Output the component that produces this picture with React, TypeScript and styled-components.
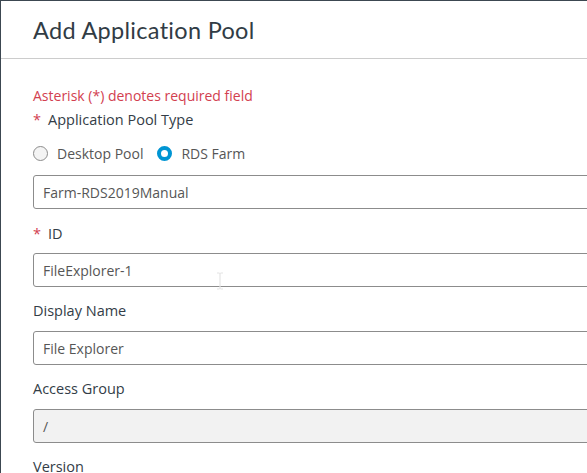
import styled, { createGlobalStyle } from 'styled-components';

const GlobalStyle = createGlobalStyle`
  html, body {
    margin: 0;
    padding: 0;
    background: #3c4751;
    overflow: hidden;
  }
  body {
    font-family: "Open Sans", "Liberation Sans", sans-serif;
  }
`;

const Modal = styled.div`
  margin: 1px 0 0 1px;
  width: 720px;
  height: 520px;
  background: #fff;
  position: relative;
`;

const Header = styled.div`
  height: 57px;
  border-bottom: 1px solid #cccccc;
  display: flex;
  align-items: center;
  padding-left: 32px;
`;

const Title = styled.h2`
  margin: 0;
  font-family: "Lato", "Open Sans", sans-serif;
  font-weight: 400;
  font-size: 23.5px;
  color: #313c45;
  letter-spacing: 0.3px;
`;

const Body = styled.div`
  padding: 28px 0 0 32px;
  display: flex;
  flex-direction: column;
`;

const RequiredNote = styled.div`
  font-size: 14px;
  color: #d2404f;
  line-height: 18px;
`;

const Label = styled.div<{ $gap?: number }>`
  display: flex;
  align-items: center;
  gap: 8px;
  font-size: 14.5px;
  font-weight: 500;
  color: #333d47;
  line-height: 20px;
  margin-top: ${p => p.$gap ?? 0}px;
`;

const Star = styled.span`
  color: #d2404f;
  font-weight: 400;
  width: 7px;
`;

const RadioRow = styled.div`
  display: flex;
  align-items: center;
  gap: 14px;
  margin-top: 13px;
  height: 20px;
`;

const RadioOption = styled.label`
  display: flex;
  align-items: center;
  gap: 9px;
  font-size: 14px;
  color: #565656;
`;

const RadioDot = styled.span<{ $checked?: boolean }>`
  box-sizing: border-box;
  width: 15px;
  height: 15px;
  border-radius: 50%;
  border: ${p => (p.$checked ? '4.5px solid #0095d3' : '1.5px solid #8c8c8c')};
  background: ${p => (p.$checked ? '#fff' : '#f4f4f4')};
`;

const Input = styled.div<{ $disabled?: boolean; $gap?: number }>`
  box-sizing: border-box;
  width: 700px;
  height: 34px;
  margin-top: ${p => p.$gap ?? 0}px;
  border: 1px solid #8c8c8c;
  border-radius: 3px;
  background: ${p => (p.$disabled ? '#f2f2f2' : '#fff')};
  display: flex;
  align-items: center;
  padding-left: 9px;
  font-size: 14px;
  color: #565656;
`;

const Cursor = styled.svg`
  position: absolute;
  left: 214px;
  top: 271px;
`;

export default function App() {
  return (
    <>
      <GlobalStyle />
      <Modal>
        <Header>
          <Title>Add Application Pool</Title>
        </Header>
        <Body>
          <RequiredNote>Asterisk (*) denotes required field</RequiredNote>
          <Label $gap={5}>
            <Star>*</Star>Application Pool Type
          </Label>
          <RadioRow>
            <RadioOption>
              <RadioDot />
              Desktop Pool
            </RadioOption>
            <RadioOption>
              <RadioDot $checked />
              RDS Farm
            </RadioOption>
          </RadioRow>
          <Input $gap={12}>Farm-RDS2019Manual</Input>
          <Label $gap={15}>
            <Star>*</Star>ID
          </Label>
          <Input $gap={9}>FileExplorer-1</Input>
          <Label $gap={14}>Display Name</Label>
          <Input $gap={10}>File Explorer</Input>
          <Label $gap={14}>Access Group</Label>
          <Input $gap={10} $disabled>/</Input>
          <Label $gap={14}>Version</Label>
        </Body>
        <Cursor width="10" height="18" viewBox="0 0 10 18">
          <path d="M2 1h2.5M5.5 1H8M5 1v16M2 17h2.5M5.5 17H8" stroke="#e4e4e4" strokeWidth="1.2" fill="none" />
        </Cursor>
      </Modal>
    </>
  );
}
